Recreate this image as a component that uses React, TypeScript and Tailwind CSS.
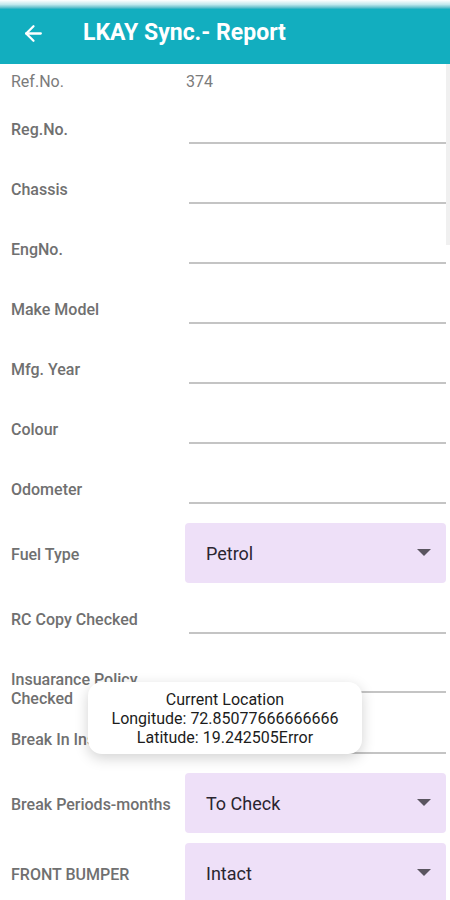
import { ArrowLeft } from "lucide-react"

const textRows = ["Reg.No.", "Chassis", "EngNo.", "Make Model", "Mfg. Year", "Colour", "Odometer"]

function LineRow({ label }: { label: string }) {
    return (
        <div className="flex h-[60px]">
            <div className="w-[178px] shrink-0 flex items-center text-[16px] font-medium text-[#707070]">
                {label}
            </div>
            <div className="flex-1">
                <div className="h-[44px] border-b-2 border-[#c4c4c4]" />
            </div>
        </div>
    )
}

function DropRow({ label, value }: { label: string; value: string }) {
    return (
        <div className="flex h-[70px]">
            <div className="w-[174px] shrink-0 flex items-center text-[16px] font-medium text-[#707070] whitespace-nowrap">
                {label}
            </div>
            <div className="flex-1 pt-[3px]">
                <div className="h-[60px] bg-[#eee0f8] rounded-[4px] flex items-center justify-between pl-[21px] pr-[15px]">
                    <span className="text-[18px] text-[#2a2530]">{value}</span>
                    <svg width="14" height="8" viewBox="0 0 14 8">
                        <path d="M0 0 L14 0 L7 7 Z" fill="#5a5560" />
                    </svg>
                </div>
            </div>
        </div>
    )
}

export default function App() {
    return (
        <div className="relative w-[450px] h-[900px] overflow-hidden bg-white font-['Roboto',sans-serif]">
            {/* status bar fade */}
            <div className="h-[9px] bg-gradient-to-b from-white via-[#bfe8ed] to-[#12aebf]" />

            {/* App bar */}
            <header className="h-[55px] bg-[#12aebf] flex items-center pl-[21px] pb-[7px]">
                <ArrowLeft className="w-[25px] h-[25px] text-white" strokeWidth={2.2} />
                <h1 className="ml-[37px] text-[23px] font-bold text-white">
                    LKAY Sync.- Report
                </h1>
            </header>

            {/* Form */}
            <div className="pl-[11px] pr-[4px]">
                <div className="flex h-[36px] items-center text-[16px] text-[#7b7b7b]">
                    <div className="w-[175px] shrink-0">Ref.No.</div>
                    <div>374</div>
                </div>

                {textRows.map((r) => (
                    <LineRow key={r} label={r} />
                ))}

                <DropRow label="Fuel Type" value="Petrol" />

                <LineRow label="RC Copy Checked" />

                <div className="flex h-[60px]">
                    <div className="w-[178px] shrink-0 pt-[20px] text-[16px] leading-[19px] font-medium text-[#707070]">
                        Insuarance Policy
                        <br />
                        Checked
                    </div>
                    <div className="flex-1">
                        <div className="h-[43px] border-b-2 border-[#c4c4c4]" />
                    </div>
                </div>

                <LineRow label="Break In Insurance" />

                <DropRow label="Break Periods-months" value="To Check" />
                <DropRow label="FRONT BUMPER" value="Intact" />
            </div>

            {/* scrollbar */}
            <div className="absolute right-0 top-[64px] w-[4px] h-[181px] bg-[#f0f0f0]" />

            {/* Location toast */}
            <div className="absolute left-[88px] top-[682px] w-[274px] h-[72px] bg-white rounded-[14px] shadow-[0_4px_14px_rgba(0,0,0,0.18)] flex flex-col items-center justify-center text-[16px] leading-[19px] text-[#1c1c1c]">
                <div>Current Location</div>
                <div>Longitude: 72.85077666666666</div>
                <div>Latitude: 19.242505Error</div>
            </div>
        </div>
    )
}
